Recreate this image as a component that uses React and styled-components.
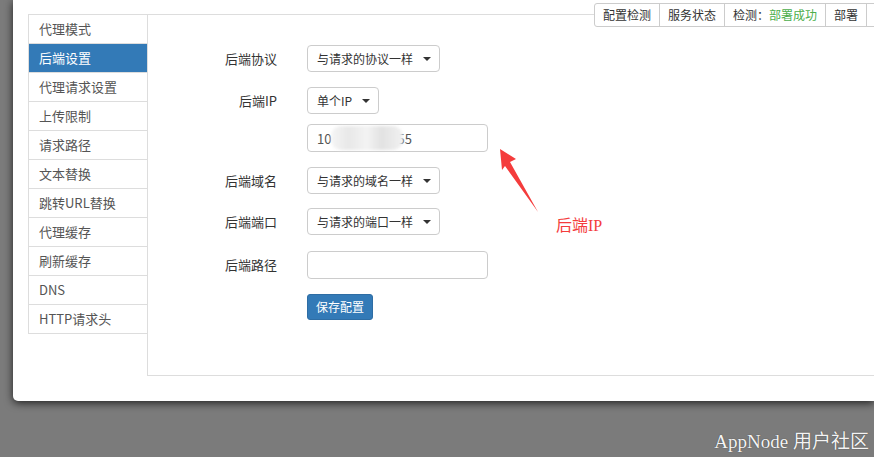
import React from 'react';
import styled, { createGlobalStyle } from 'styled-components';

const GlobalStyle = createGlobalStyle`
    html, body {
        margin: 0;
        padding: 0;
        overflow: hidden;
    }
    body {
        font-family: "Noto Sans CJK SC", "Liberation Sans", sans-serif;
        background: #7b7b7b;
    }
`

const menu = ['代理模式', '后端设置', '代理请求设置', '上传限制', '请求路径', '文本替换', '跳转URL替换', '代理缓存', '刷新缓存', 'DNS', 'HTTP请求头']

const Select = ({ children }) => (
    <SelectBox>
        <span>{children}</span>
        <Caret />
    </SelectBox>
)

const App = () => {
    return (
        <>
            <GlobalStyle />
            <Screen>
                <Panel>
                    <Toolbar>
                        <ToolButton>配置检测</ToolButton>
                        <ToolButton>服务状态</ToolButton>
                        <ToolButton>检测：<Ok>部署成功</Ok></ToolButton>
                        <ToolButton>部署</ToolButton>
                        <ToolButton $blank />
                    </Toolbar>
                    <Body>
                        <Sidebar>
                            {menu.map((m) => (
                                <MenuItem key={m} $active={m === '后端设置'}>{m}</MenuItem>
                            ))}
                        </Sidebar>
                        <Content>
                            <Form>
                                <Label>后端协议</Label>
                                <Select>与请求的协议一样</Select>
                                <Label $mt={15}>后端IP</Label>
                                <Field $mt={15}><Select>单个IP</Select></Field>
                                <span />
                                <Field $mt={10}>
                                    <Input>
                                        10<Blur />55
                                    </Input>
                                </Field>
                                <Label $mt={15}>后端域名</Label>
                                <Field $mt={15}><Select>与请求的域名一样</Select></Field>
                                <Label $mt={14}>后端端口</Label>
                                <Field $mt={14}><Select>与请求的端口一样</Select></Field>
                                <Label $mt={16}>后端路径</Label>
                                <Field $mt={16}><Input /></Field>
                                <span />
                                <Field $mt={15}><SaveButton>保存配置</SaveButton></Field>
                            </Form>
                        </Content>
                    </Body>
                    <Note>
                        <svg width="60" height="80" viewBox="490 140 60 80">
                            <polygon points="500,149 516,159 510,162 538,212 505,166 502,170" fill="#f43c3c" />
                        </svg>
                        <NoteText>后端IP</NoteText>
                    </Note>
                </Panel>
                <Footer>AppNode 用户社区</Footer>
            </Screen>
        </>
    )
}

const Screen = styled.div`
    width: 874px;
    height: 457px;
    background: #7b7b7b;
    display: flex;
    flex-direction: column;
`
const Panel = styled.div`
    position: relative;
    overflow: hidden;
    margin-left: 13px;
    height: 401px;
    background: #fff;
    border-bottom-left-radius: 5px;
    box-shadow: 0 2px 8px rgba(0, 0, 0, 0.75);
    padding: 14px 0 0 15px;
    box-sizing: border-box;
`
const Toolbar = styled.div`
    position: absolute;
    top: 3px;
    left: 581px;
    display: flex;
    background: #fff;
    border: 1px solid #ccc;
    border-radius: 3px;
    height: 22px;
    white-space: nowrap;
`
const ToolButton = styled.div`
    padding: 0 8px;
    width: ${(p) => (p.$blank ? '30px' : 'auto')};
    font-size: 12px;
    line-height: 22px;
    color: #333;
    border-left: 1px solid #ccc;
    &:first-child {
        border-left: none;
    }
`
const Ok = styled.span`
    color: #4cae4c;
`
const Body = styled.div`
    display: flex;
    align-items: flex-start;
`
const Sidebar = styled.div`
    width: 119px;
    border-top: 1px solid #ddd;
    border-left: 1px solid #ddd;
    box-sizing: border-box;
`
const MenuItem = styled.div`
    height: 29px;
    box-sizing: border-box;
    border-bottom: 1px solid #ddd;
    padding-left: 10px;
    font-size: 13px;
    line-height: 28px;
    color: ${(p) => (p.$active ? '#fff' : '#555')};
    background: ${(p) => (p.$active ? '#337ab7' : '#fff')};
`
const Content = styled.div`
    flex: 1;
    height: 362px;
    box-sizing: border-box;
    border: 1px solid #ddd;
    border-right: none;
    padding-top: 30px;
`
const Form = styled.div`
    display: grid;
    grid-template-columns: 129px auto;
    column-gap: 30px;
    align-items: center;
    justify-items: start;
`
const Label = styled.div`
    justify-self: end;
    margin-top: ${(p) => p.$mt || 0}px;
    font-size: 13px;
    line-height: 18px;
    color: #333;
`
const Field = styled.div`
    margin-top: ${(p) => p.$mt || 0}px;
`
const SelectBox = styled.div`
    display: inline-flex;
    align-items: center;
    height: 27px;
    box-sizing: border-box;
    padding: 0 8px 0 9px;
    border: 1px solid #ccc;
    border-radius: 4px;
    font-size: 12px;
    color: #333;
    gap: 10px;
`
const Caret = styled.span`
    width: 0;
    height: 0;
    border-left: 4px solid transparent;
    border-right: 4px solid transparent;
    border-top: 4px solid #333;
`
const Input = styled.div`
    width: 181px;
    height: 28px;
    box-sizing: border-box;
    border: 1px solid #ccc;
    border-radius: 4px;
    padding-left: 9px;
    display: flex;
    align-items: center;
    font-size: 13px;
    color: #555;
`
const Blur = styled.span`
    display: inline-block;
    width: 72px;
    height: 24px;
    margin-right: -6px;
    border-radius: 10px;
    background: linear-gradient(90deg, #f5f5f5 0%, #e8e8e8 25%, #f3f3f3 50%, #e2e2e2 70%, #f1f1f1 100%);
    filter: blur(1.5px);
    position: relative;
    z-index: 1;
`
const SaveButton = styled.div`
    height: 26px;
    box-sizing: border-box;
    padding: 0 8px;
    border: 1px solid #2e6da4;
    border-radius: 3px;
    background: #337ab7;
    color: #fff;
    font-size: 12px;
    line-height: 24px;
`
const Note = styled.div`
    position: absolute;
    left: 477px;
    top: 140px;
    display: flex;
    align-items: flex-end;
`
const NoteText = styled.div`
    margin-left: 6px;
    margin-bottom: -16px;
    font-family: "Liberation Serif", "Noto Sans CJK SC", serif;
    font-size: 16px;
    color: #f43c3c;
`
const Footer = styled.div`
    display: flex;
    justify-content: flex-end;
    padding: 25px 5px 0 0;
    font-family: "Liberation Serif", "Noto Sans CJK SC", serif;
    font-size: 19px;
    color: #f4f4f4;
    text-shadow: 0 0 1px #333;
`

export default App
